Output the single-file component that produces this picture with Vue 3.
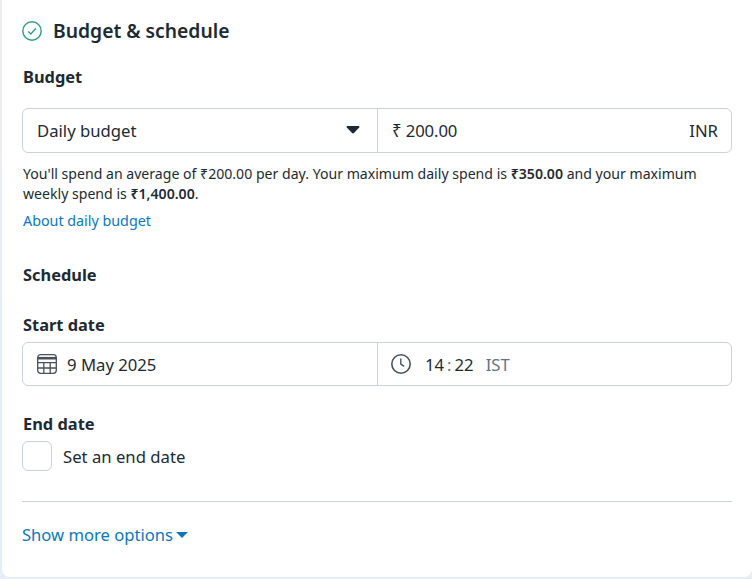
<template>
  <div class="page">
    <section class="card">
      <header class="title-row">
        <svg class="check" width="20" height="20" viewBox="0 0 20 20" fill="none">
          <circle cx="10" cy="10" r="9.2" stroke="#2f9e7f" stroke-width="1.4" />
          <path d="M6.2 10.4l2.6 2.6 5-5.4" stroke="#2f9e7f" stroke-width="1.4" />
        </svg>
        <h2>Budget &amp; schedule</h2>
      </header>

      <h3 class="budget-label">Budget</h3>
      <div class="split budget-box">
        <div class="cell left">
          <span>{{ budgetType }}</span>
          <svg class="caret" width="14" height="9" viewBox="0 0 14 9">
            <path d="M1.5 1h11c.8 0 1.2.8.7 1.4L8 8c-.5.5-1.4.5-2 0L.8 2.4C.3 1.8.7 1 1.5 1z" fill="#1c2b33" />
          </svg>
        </div>
        <div class="cell right">
          <span class="amount">₹ {{ amount }}</span>
          <span>INR</span>
        </div>
      </div>
      <p class="note">
        You'll spend an average of ₹200.00 per day. Your maximum daily spend is
        <b>₹350.00</b> and your maximum<br />weekly spend is <b>₹1,400.00</b>.
      </p>
      <a class="link about">About daily budget</a>

      <h3 class="schedule">Schedule</h3>

      <h3 class="start-label">Start date</h3>
      <div class="split date-box">
        <div class="cell date-left">
          <svg width="22" height="22" viewBox="0 0 22 22" fill="none" stroke="#47525c" stroke-width="1.3">
            <rect x="1.7" y="1.7" width="18.6" height="18.6" rx="3" />
            <path d="M1.7 5.2h18.6" stroke-width="2.6" />
            <path d="M1.7 9.6h18.6M1.7 15h18.6M7.8 9.6v10.7M14.2 9.6v10.7" />
          </svg>
          <span>9 May 2025</span>
        </div>
        <div class="cell date-right">
          <svg width="22" height="22" viewBox="0 0 22 22" fill="none" stroke="#47525c" stroke-width="1.6">
            <circle cx="11" cy="11" r="9.2" />
            <path d="M10.8 5.6v5.6l3.4 2.2" stroke-width="1.4" />
          </svg>
          <span class="time">14<i>:</i>22</span>
          <span class="zone">IST</span>
        </div>
      </div>

      <h3 class="end-label">End date</h3>
      <label class="end-row">
        <span class="box"></span>
        <span>Set an end date</span>
      </label>

      <hr />

      <a class="link more">Show more options<span class="more-caret"></span></a>
    </section>
  </div>
</template>

<script setup>
import { ref } from 'vue'

const budgetType = ref('Daily budget')
const amount = ref('200.00')
</script>

<style>
html, body {
  margin: 0;
  background: #e3eefa;
}
</style>

<style scoped>
.page {
  width: 752px;
  height: 579px;
  overflow: hidden;
  box-sizing: border-box;
  padding: 0 0 2px 2px;
  font-family: "Noto Sans", "Open Sans", sans-serif;
  color: #1c2b33;
  background: linear-gradient(#eeeeee 0, #eeeeee 100px, #e3eefa 300px);
}

.card {
  height: 100%;
  box-sizing: border-box;
  background: #fff;
  border-radius: 0 0 8px 8px;
  padding: 18px 20px 0 20px;
}

.title-row {
  display: flex;
  align-items: center;
  gap: 11px;
  height: 25px;
}

h2 {
  margin: 0;
  font-size: 19.3px;
  font-weight: 600;
}

h3 {
  margin: 0 0 0 1px;
  font-size: 16.4px;
  line-height: 20px;
  font-weight: 700;
}

.budget-label {
  margin-top: 24px;
}

.split {
  display: flex;
  box-sizing: border-box;
  width: 710px;
  border: 1px solid #cbd2d9;
  border-radius: 6px;
  font-size: 16.7px;
}

.budget-box {
  height: 45px;
  margin-top: 21px;
}

.date-box {
  height: 44px;
  margin-top: 7px;
}

.cell {
  display: flex;
  align-items: center;
  box-sizing: border-box;
}

.left {
  width: 355px;
  justify-content: space-between;
  padding: 0 17px 0 14px;
  border-right: 1px solid #cbd2d9;
}

.right {
  flex: 1;
  justify-content: space-between;
  padding: 0 13px 0 14px;
}

.amount {
  letter-spacing: -0.1px;
}

.caret {
  margin-top: -3px;
}

.note {
  margin: 11px 0 0 1px;
  font-size: 14.1px;
  line-height: 20px;
  width: 705px;
}

.note b {
  font-weight: 600;
}

.link {
  color: #0a78be;
}

.about {
  display: block;
  margin: 7px 0 0 1px;
  font-size: 14.3px;
  line-height: 20px;
}

.schedule {
  margin-top: 34px;
}

h3.start-label {
  margin-top: 30px;
}

.date-left {
  width: 355px;
  gap: 9px;
  padding-left: 13px;
  border-right: 1px solid #cbd2d9;
}

.date-right {
  flex: 1;
  padding-left: 12px;
}

.time {
  margin-left: 13px;
}

.time i {
  font-style: normal;
  margin: 0 3px;
  color: #6a7780;
}

.zone {
  margin-left: 12px;
  color: #5f7684;
}

h3.end-label {
  margin-top: 28px;
}

.end-row {
  display: flex;
  align-items: center;
  gap: 11px;
  margin-top: 7px;
  font-size: 16.7px;
}

.box {
  width: 30px;
  height: 30px;
  box-sizing: border-box;
  border: 1px solid #cbd2d9;
  border-radius: 6px;
}

hr {
  width: 710px;
  margin: 30px 0 0;
  border: 0;
  border-top: 1px solid #cbd2d9;
}

.more {
  display: flex;
  align-items: center;
  gap: 3px;
  margin: 22px 0 0 0;
  font-size: 16.6px;
  line-height: 22px;
}

.more-caret {
  width: 0;
  height: 0;
  border-left: 6px solid transparent;
  border-right: 6px solid transparent;
  border-top: 6px solid #0a78be;
  margin-top: -1px;
}
</style>
